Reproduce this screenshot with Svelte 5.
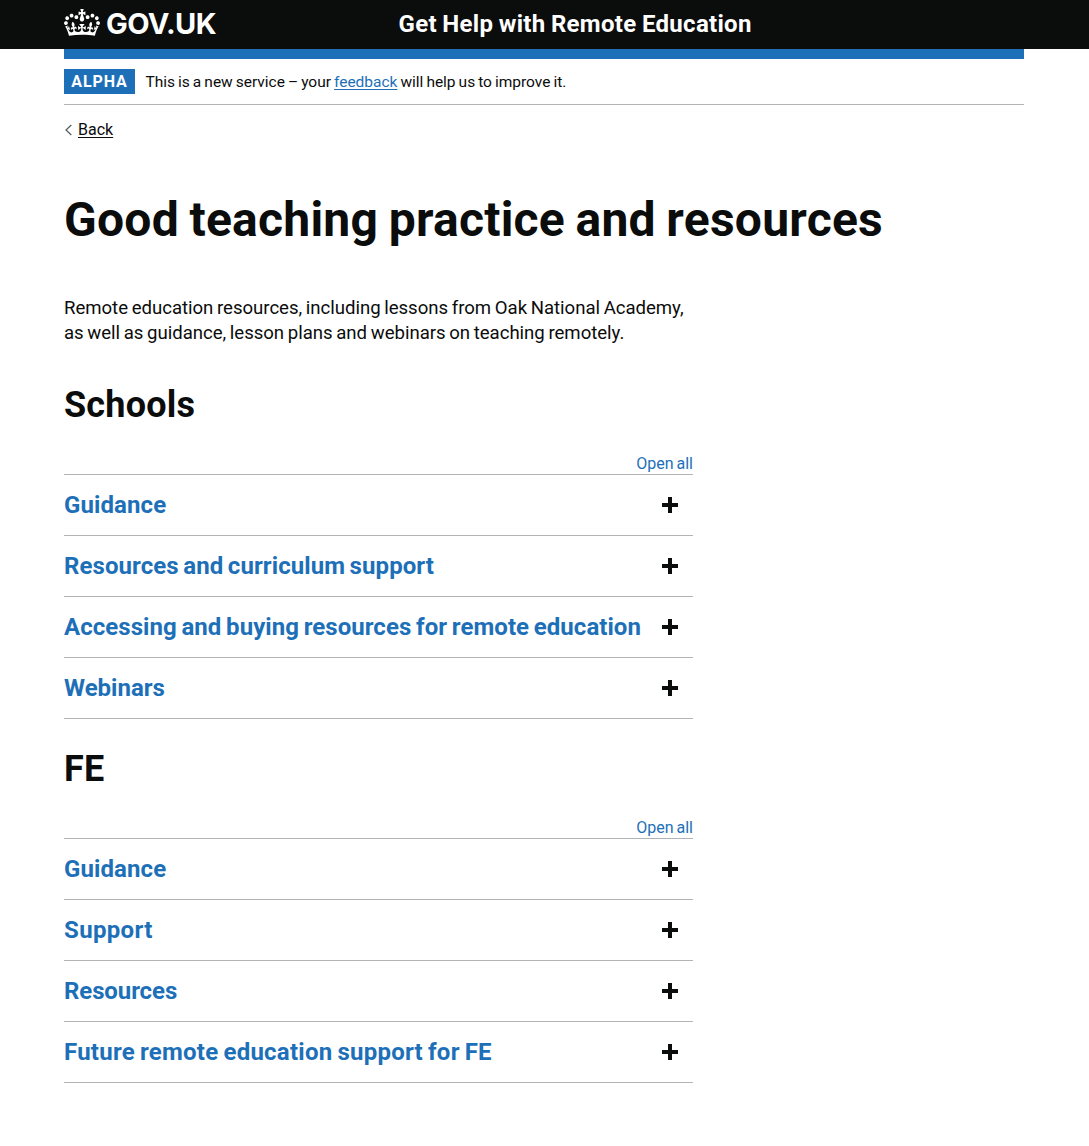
<script>
  let groups = $state([
    {
      id: 'schools',
      title: 'Schools',
      sections: [
        { name: 'Guidance', fit: 'guidance' },
        { name: 'Resources and curriculum support', fit: 'curriculum' },
        { name: 'Accessing and buying resources for remote education', fit: 'buying' },
        { name: 'Webinars', fit: 'webinars' }
      ]
    },
    {
      id: 'fe',
      title: 'FE',
      sections: [
        { name: 'Guidance', fit: 'guidance' },
        { name: 'Support', fit: 'support' },
        { name: 'Resources', fit: 'resources' },
        { name: 'Future remote education support for FE', fit: 'future' }
      ]
    }
  ]);
</script>

<header class="header">
  <div class="container header-row">
    <a class="logo" href="#top">
      <svg class="crown" viewBox="0 0 132 97" width="36" height="27" preserveAspectRatio="none" aria-hidden="true">
        <path fill="currentColor" fill-rule="evenodd" d="M25 30.2c3.5 1.5 7.7-.2 9.1-3.7 1.5-3.6-.2-7.8-3.9-9.2-3.6-1.4-7.6.3-9.1 3.9-1.4 3.5.3 7.5 3.9 9zM9 39.5c3.6 1.5 7.8-.2 9.2-3.7 1.5-3.6-.2-7.8-3.9-9.1-3.6-1.5-7.6.2-9.1 3.8-1.4 3.5.3 7.5 3.8 9zM4.4 57.2c3.5 1.5 7.7-.2 9.1-3.8 1.5-3.6-.2-7.7-3.9-9.1-3.5-1.5-7.6.3-9.1 3.8-1.4 3.5.3 7.6 3.9 9.1zm38.3-21.4c3.5 1.5 7.7-.2 9.1-3.8 1.5-3.6-.2-7.7-3.9-9.1-3.6-1.5-7.6.3-9.1 3.8-1.3 3.6.4 7.7 3.9 9.1zm64.4-5.6c-3.6 1.5-7.8-.2-9.1-3.7-1.5-3.6.2-7.8 3.8-9.2 3.6-1.4 7.7.3 9.2 3.9 1.3 3.5-.4 7.5-3.9 9zm15.9 9.3c-3.6 1.5-7.7-.2-9.1-3.7-1.5-3.6.2-7.8 3.7-9.1 3.6-1.5 7.7.2 9.2 3.8 1.5 3.5-.3 7.5-3.8 9zm4.7 17.7c-3.6 1.5-7.8-.2-9.2-3.8-1.5-3.6.2-7.7 3.9-9.1 3.6-1.5 7.7.3 9.2 3.8 1.3 3.5-.4 7.6-3.9 9.1zM89.3 35.8c-3.6 1.5-7.8-.2-9.2-3.8-1.4-3.6.2-7.7 3.9-9.1 3.6-1.5 7.7.3 9.2 3.8 1.4 3.6-.3 7.7-3.9 9.1zM69.7 17.7l8.9 4.7V9.3l-8.9 2.8c-.2-.3-.5-.6-.9-.9L72.4 0H59.6l3.5 11.2c-.3.3-.6.5-.9.9l-8.8-2.8v13.1l8.8-4.7c.3.3.6.7.9.9l-5 15.4v.1c-.2.8-.4 1.6-.4 2.4 0 4.1 3.1 7.5 7 8.1h.2c.3 0 .7.1 1 .1.4 0 .7 0 1-.1h.2c4-.6 7.1-4.1 7.1-8.1 0-.8-.1-1.7-.4-2.4V34l-5.1-15.4c.4-.2.7-.6 1-.9zM66 92.8c16.9 0 32.8 1.1 47.1 3.2 4-16.9 8.9-26.7 14-33.5l-9.6-3.4c1 4.9 1.1 7.2 0 10.2-1.5-1.4-3-4.3-4.2-8.7L108.6 76c2.8-2 5-3.2 7.5-3.3-4.4 9.4-10 11.9-13.6 11.2-4.3-.8-6.3-4.6-5.6-7.9 1-4.7 5.7-5.9 8-.5 4.3-8.7-3-11.4-7.6-8.8 7.1-7.2 7.9-13.5 2.1-21.1-8 6.1-8.1 12.3-4.5 20.8-4.7-5.4-12.1-2.5-9.5 6.2 3.4-5.2 7.9-2 7.2 3.1-.6 4.3-6.4 7.8-13.5 7.2-10.3-.9-10.9-8-11.2-13.8 2.5-.5 7.1 1.8 11 7.3L80.2 60c-4.1 4.4-8 5.3-12.3 5.4 1.4-4.4 8-11.6 8-11.6H55.5s6.4 7.2 7.9 11.6c-4.2-.1-8-1-12.3-5.4l1.4 16.4c3.9-5.5 8.5-7.7 10.9-7.3-.3 5.8-.9 12.8-11.1 13.8-7.2.6-12.9-2.9-13.5-7.2-.7-5 3.8-8.3 7.1-3.1 2.7-8.7-4.6-11.6-9.4-6.2 3.7-8.5 3.6-14.7-4.6-20.8-5.8 7.6-5 13.9 2.2 21.1-4.7-2.6-11.9.1-7.7 8.8 2.3-5.5 7.1-4.2 8.1.5.7 3.3-1.3 7.1-5.7 7.9-3.5.7-9-1.8-13.5-11.2 2.5.1 4.7 1.3 7.5 3.3l-4.7-15.4c-1.2 4.4-2.7 7.2-4.3 8.7-1.1-3-.9-5.3 0-10.2l-9.5 3.4c5 6.9 9.9 16.7 14 33.5 14.8-2.1 30.8-3.2 47.7-3.2z" />
      </svg>
      <span class="logo-text">GOV.UK</span>
    </a>
    <a class="service" href="#top">Get Help with Remote Education</a>
  </div>
</header>

<div class="container">
  <div class="bar"></div>
  <div class="phase">
    <strong class="tag">Alpha</strong>
    <span class="phase-text">This is a new service – your <a href="#feedback">feedback</a> will help us to improve it.</span>
  </div>
  <a class="back" href="#back">
    <svg width="8" height="12" viewBox="0 0 8 12" aria-hidden="true"><path d="M7.3 1 2 6l5.3 5" fill="none" stroke="#505a5f" stroke-width="1.2" /></svg>
    <span>Back</span>
  </a>

  <main>
    <h1>Good teaching practice and resources</h1>
    <p class="intro">
      Remote education resources, including lessons from Oak National Academy,<br />
      as well as guidance, lesson plans and webinars on teaching remotely.
    </p>

    {#each groups as group (group.id)}
      <section class="group">
        <h2>{group.title}</h2>
        <div class="controls"><button class="open-all" type="button">Open all</button></div>
        {#each group.sections as section (section.name)}
          <h3 class="row">
            <button type="button"><span class={section.fit}>{section.name}</span></button>
            <svg class="plus" width="16" height="16" viewBox="0 0 16 16" shape-rendering="crispEdges" aria-hidden="true"><path d="M6 0h4v6h6v4h-6v6H6v-6H0V6h6z" fill="#0b0c0c" /></svg>
          </h3>
        {/each}
      </section>
    {/each}
  </main>
</div>

<style>
  :global(body) {
    background: #fff;
    color: #0b0c0c;
    font-family: Roboto, "Liberation Sans", sans-serif;
    font-kerning: normal;
  }
  a { color: inherit; text-decoration: none; }
  button {
    padding: 0;
    border: 0;
    background: none;
    color: #1d70b8;
    font: inherit;
    white-space: nowrap;
    cursor: pointer;
  }
  .container { width: 960px; margin: 0 auto 0 64px; }
  .header { height: 49px; background: #0b0c0c; color: #fff; }
  .header-row { display: flex; height: 48px; }
  .logo { display: flex; width: 334.5px; padding-top: 9px; box-sizing: border-box; }
  .crown { flex: none; }
  .logo-text { margin: -3px 0 0 6px; font-family: Inter, sans-serif; font-size: 29px; font-weight: 650; line-height: 36px; letter-spacing: -0.6px; }
  .service { font-size: 24px; font-weight: 700; line-height: 48px; letter-spacing: 0.3px; word-spacing: -0.8px; white-space: nowrap; }
  .bar { height: 10px; background: #1d70b8; }
  .phase { display: flex; align-items: center; height: 45px; border-bottom: 1px solid #b1b4b6; }
  .tag {
    width: 71px;
    height: 25px;
    margin-right: 10.5px;
    background: #1d70b8;
    color: #fff;
    font-size: 16px;
    font-weight: 700;
    line-height: 25px;
    letter-spacing: 0.9px;
    text-align: center;
    text-transform: uppercase;
  }
  .phase-text { font-size: 15.5px; letter-spacing: -0.02px; word-spacing: -0.75px; white-space: nowrap; }
  .phase-text a { color: #1d70b8; text-decoration: underline; text-underline-offset: 2px; text-decoration-thickness: 1px; }
  .back { display: flex; align-items: center; gap: 6px; height: 20px; margin-top: 15px; font-size: 16px; }
  .back span { padding-bottom: 2px; text-decoration: underline; text-underline-offset: 2px; text-decoration-thickness: 1px; }
  h1 { margin: 55px 0 51px; font-size: 48px; font-weight: 700; line-height: 50px; letter-spacing: 0.25px; word-spacing: -1.7px; white-space: nowrap; }
  .intro { margin: 0 0 39px; font-size: 18.6px; line-height: 25px; letter-spacing: -0.03px; word-spacing: -0.9px; white-space: nowrap; }
  .group { width: 629px; }
  h2 { margin: 0; font-size: 36px; font-weight: 700; line-height: 40px; letter-spacing: 0.2px; }
  .controls { display: flex; justify-content: flex-end; margin-top: 30px; height: 19px; border-bottom: 1px solid #b1b4b6; }
  .open-all { height: 18px; font-size: 16px; line-height: 18px; word-spacing: -1px; }
  .row {
    display: flex;
    align-items: center;
    justify-content: space-between;
    height: 60px;
    margin: 0;
    padding-right: 15px;
    border-bottom: 1px solid #b1b4b6;
    font-size: 24px;
    font-weight: 700;
  }
  .guidance { letter-spacing: 0.1px; }
  .curriculum { letter-spacing: 0.08px; word-spacing: -1.5px; }
  .buying { letter-spacing: 0.05px; word-spacing: -1.3px; }
  .support { letter-spacing: 0.35px; }
  .resources { letter-spacing: -0.1px; }
  .future { letter-spacing: 0.25px; word-spacing: -1.2px; }
  .plus { flex: none; }
  .group + .group { margin-top: 30px; }
</style>
